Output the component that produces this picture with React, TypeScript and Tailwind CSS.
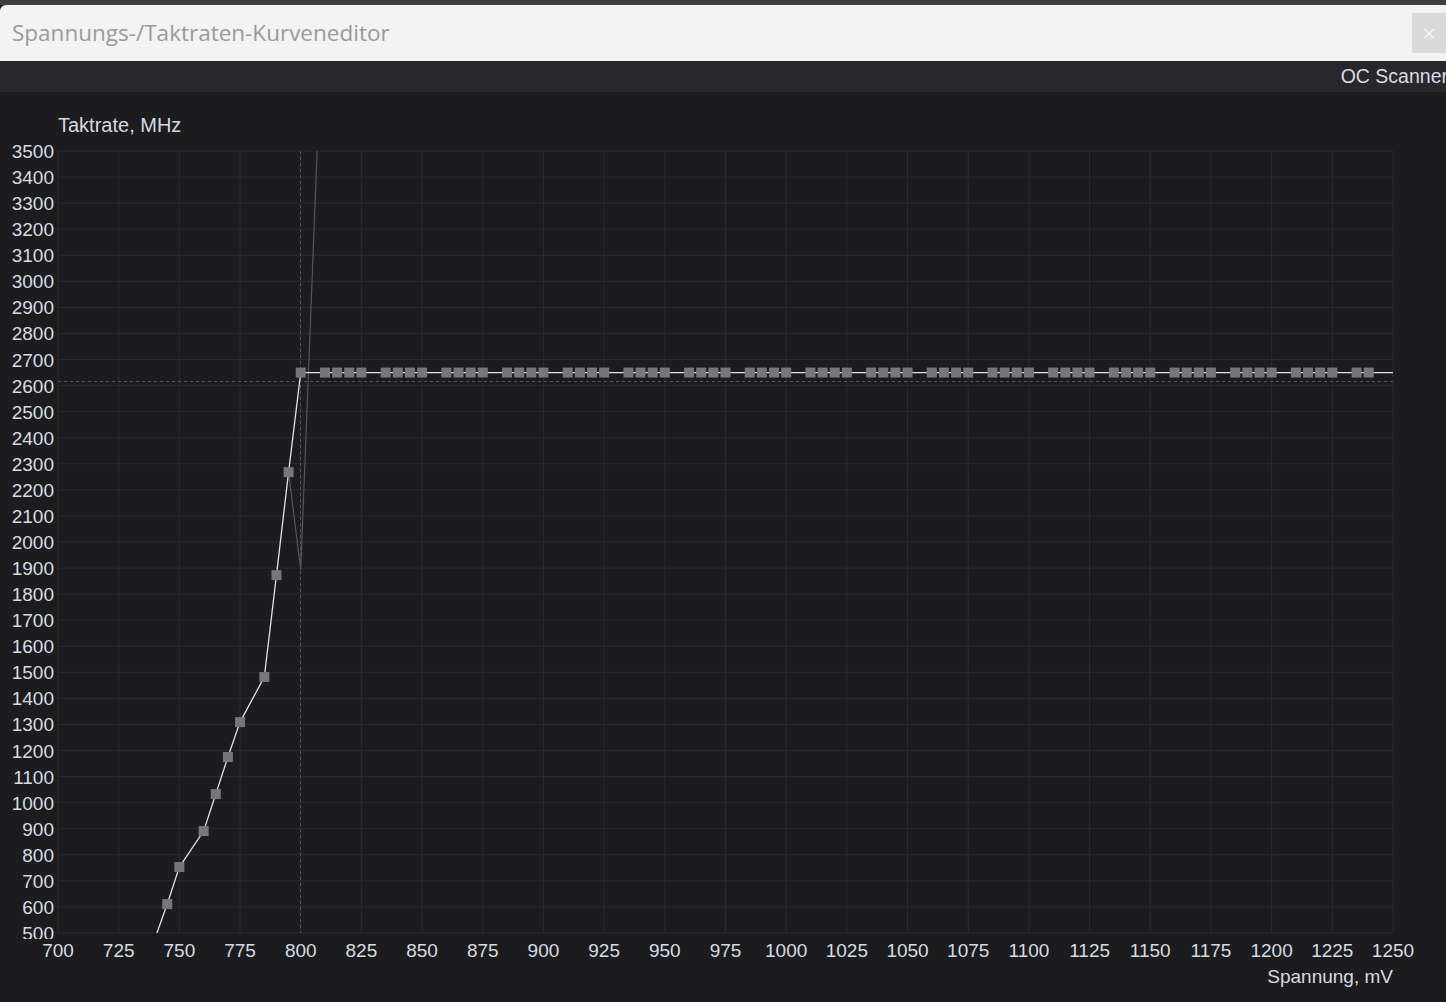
import React from 'react'

// chart scale, page coordinates (svg viewBox starts at y 92)
const X0 = 58
const X1 = 1393
const Y0 = 933
const Y1 = 151

const xOf = (mv: number) => X0 + ((mv - 700) * (X1 - X0)) / 550
const yOf = (mhz: number) => Y0 - ((mhz - 500) * (Y0 - Y1)) / 3000

const curve: [number, number][] = [
  [740, 480],
  [745, 611],
  [750, 753],
  [760, 891],
  [765, 1033],
  [770, 1175],
  [775, 1309],
  [785, 1482],
  [790, 1873],
  [795, 2268],
  [800, 2650],
]

const flat: number[] = []
for (let mv = 810; mv <= 1240; mv += 5) {
  if (mv % 25 !== 5) flat.push(mv)
}

const xTicks = Array.from({ length: 23 }, (_, i) => 700 + i * 25)
const yTicks = Array.from({ length: 31 }, (_, i) => 500 + i * 100)

const labelFont = { fontFamily: '"Liberation Sans", Arial, sans-serif' }

function CurveChart() {
  const linePts = curve.map(([mv, f]) => `${xOf(mv)},${yOf(f)}`).join(' ')
  const ghostPts = `${xOf(795)},${yOf(2268)} ${xOf(800)},${yOf(1893)} ${xOf(807.6)},${yOf(3700)}`

  return (
    <svg
      className="block h-full w-full"
      viewBox="0 92 1446 910"
      preserveAspectRatio="none"
      aria-label="Kurve"
    >
      <defs>
        <clipPath id="plot">
          <rect x={X0} y={Y1} width={X1 - X0} height={Y0 - Y1} />
        </clipPath>
        <clipPath id="ylabels">
          <rect x={0} y={120} width={X0} height={819} />
        </clipPath>
      </defs>

      {/* grid */}
      <g stroke="#2b2b2f" strokeWidth={1}>
        {xTicks.map((mv) => (
          <line key={`gx${mv}`} x1={xOf(mv)} x2={xOf(mv)} y1={Y1} y2={Y0} />
        ))}
        {yTicks.map((f) => (
          <line key={`gy${f}`} x1={X0} x2={X1} y1={yOf(f)} y2={yOf(f)} />
        ))}
      </g>

      {/* crosshair */}
      <g stroke="#56565a" strokeWidth={1} strokeDasharray="3 3">
        <line x1={X0} x2={X1} y1={381.5} y2={381.5} />
        <line x1={300.5} x2={300.5} y1={Y1} y2={Y0} />
      </g>

      <g clipPath="url(#plot)">
        <polyline points={ghostPts} fill="none" stroke="#55555a" strokeWidth={1.2} />
        <polyline points={linePts} fill="none" stroke="#e2e2e2" strokeWidth={1.3} />
        <line x1={xOf(800)} x2={X1} y1={yOf(2650)} y2={yOf(2650)} stroke="#e2e2e2" strokeWidth={1.3} />
        {curve.map(([mv, f]) => (
          <rect key={`c${mv}`} x={xOf(mv) - 5} y={yOf(f) - 5} width={10} height={10} fill="#777779" />
        ))}
        {flat.map((mv) => (
          <rect key={`f${mv}`} x={xOf(mv) - 5} y={yOf(2650) - 5} width={10} height={10} fill="#777779" />
        ))}
      </g>

      {/* axis labels */}
      <g fill="#d5dbe1" fontSize={19} style={labelFont}>
        <text x={X0} y={132} fontSize={20}>
          Taktrate, MHz
        </text>
        <g clipPath="url(#ylabels)">
          {yTicks.map((f) => (
            <text key={`ly${f}`} x={54} y={yOf(f) + 7} textAnchor="end">
              {f}
            </text>
          ))}
        </g>
        {xTicks.map((mv) => (
          <text key={`lx${mv}`} x={xOf(mv)} y={956.5} textAnchor="middle">
            {mv}
          </text>
        ))}
        <text x={X1} y={983} textAnchor="end">
          Spannung, mV
        </text>
      </g>
    </svg>
  )
}

export default function App() {
  return (
    <div className="flex h-[1002px] w-[1446px] flex-col overflow-hidden bg-[#1c1c1f]">
      <div className="h-[5px] shrink-0 bg-[#3e3e40]" />
      <div className="flex h-[56px] shrink-0 items-center justify-between rounded-tl-[6px] bg-[#f3f3f3]">
        <span
          className="pl-3 text-[22.5px] leading-none text-[#9a9a9a]"
          style={{ fontFamily: '"Open Sans", "Noto Sans", sans-serif' }}
        >
          Spannungs-/Taktraten-Kurveneditor
        </span>
        <div className="flex h-10 w-[34px] items-center justify-center bg-[#d9d9d9] text-[24px] leading-none text-[#f2f2f2]">
          ×
        </div>
      </div>
      <div className="flex h-[31px] shrink-0 items-center justify-end overflow-hidden bg-[#27272c]">
        <span
          className="-mr-[2px] whitespace-nowrap text-[19.5px] leading-none text-[#d8dde3]"
          style={{ fontFamily: '"Liberation Sans", Arial, sans-serif' }}
        >
          OC Scanner
        </span>
      </div>
      <div className="min-h-0 flex-1">
        <CurveChart />
      </div>
    </div>
  )
}
